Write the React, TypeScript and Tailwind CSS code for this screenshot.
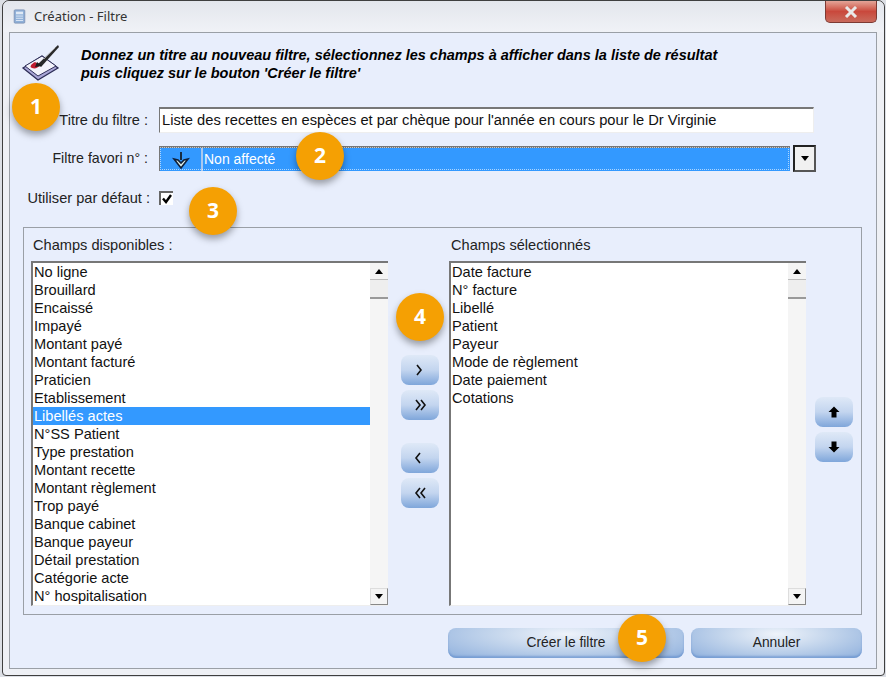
import type { ReactNode } from 'react';

const available = [
  'No ligne', 'Brouillard', 'Encaissé', 'Impayé', 'Montant payé', 'Montant facturé', 'Praticien',
  'Etablissement', 'Libellés actes', 'N°SS Patient', 'Type prestation', 'Montant recette',
  'Montant règlement', 'Trop payé', 'Banque cabinet', 'Banque payeur', 'Détail prestation',
  'Catégorie acte', 'N° hospitalisation',
];

const selected = [
  'Date facture', 'N° facture', 'Libellé', 'Patient', 'Payeur', 'Mode de règlement', 'Date paiement', 'Cotations',
];

function Badge({ n, className }: { n: number; className: string }) {
  return (
    <div
      className={`absolute w-[48px] h-[48px] rounded-full bg-[#f5a003] text-white font-bold text-[21px] flex items-center justify-center shadow-[0_4px_7px_rgba(0,0,0,0.35)] font-['Open_Sans',sans-serif] ${className}`}
    >
      {n}
    </div>
  );
}

function ScrollBar() {
  return (
    <div className="w-[18px] shrink-0 flex flex-col justify-between bg-[#f5f5f5]">
      <div>
        <div className="h-[17px] bg-[#f4f4f4] border-b border-[#bbb] flex items-center justify-center">
          <div className="w-0 h-0 border-x-[4px] border-x-transparent border-b-[5px] border-b-black" />
        </div>
        <div className="h-[19px] bg-[#eeeeee] border-b-2 border-[#999]" />
      </div>
      <div className="h-[17px] bg-[#f4f4f4] border border-[#ddd] border-b-[#888] border-r-[#888] flex items-center justify-center">
        <div className="w-0 h-0 border-x-[4px] border-x-transparent border-t-[5px] border-t-black" />
      </div>
    </div>
  );
}

function ListBox({ items, active }: { items: string[]; active?: string }) {
  return (
    <div className="w-[357px] h-[345px] flex bg-white border-l-2 border-t-2 border-[#777] border-b border-b-[#eee]">
      <ul className="flex-1 overflow-hidden">
        {items.map((item) => (
          <li
            key={item}
            className={`h-[18px] leading-[18px] pl-[1px] text-[14.6px] ${item === active ? 'bg-[#3399ff] text-white' : 'text-[#111]'}`}
          >
            {item}
          </li>
        ))}
      </ul>
      <ScrollBar />
    </div>
  );
}

function BlueButton({ children, className = '' }: { children: ReactNode; className?: string }) {
  return (
    <button className={`w-[38px] h-[30px] rounded-[8px] bg-gradient-to-b from-[#dfe9f7] via-[#c3d5ef] to-[#7fa6da] flex items-center justify-center text-black ${className}`}>
      {children}
    </button>
  );
}

function Chevrons({ dir, double }: { dir: 'left' | 'right'; double?: boolean }) {
  const base = dir === 'right' ? 'M6 5l4 5-4 5' : 'M10 5l-4 5 4 5';
  const second = dir === 'right' ? 'M11 5l4 5-4 5' : 'M15 5l-4 5 4 5';
  return (
    <svg width="20" height="20" viewBox="0 0 20 20" fill="none" stroke="#111" strokeWidth="1.6" className={double ? '' : dir === 'right' ? 'ml-[1px]' : ''}>
      <path d={base} />
      {double && <path d={second} />}
    </svg>
  );
}

function BlockArrow({ up }: { up?: boolean }) {
  return (
    <svg width="14" height="14" viewBox="0 0 14 14" fill="#000">
      <path d={up ? 'M7 1.5L12.5 7H9.5v5.5h-5V7H1.5z' : 'M7 12.5L12.5 7H9.5V1.5h-5V7H1.5z'} />
    </svg>
  );
}

function WideButton({ children, className }: { children: ReactNode; className: string }) {
  return (
    <button className={`h-[30px] rounded-[8px] text-[13.8px] text-[#222] bg-[radial-gradient(ellipse_at_50%_20%,#eef3fa_0%,#c3d5ec_45%,#8fb0dd_100%)] shadow-[inset_0_-2px_2px_rgba(90,135,200,0.55)] ${className}`}>
      {children}
    </button>
  );
}

export default function App() {
  return (
    <div className="relative w-[886px] h-[677px] overflow-hidden bg-[#dcdfe5] pl-[2px] font-['Liberation_Sans',sans-serif] text-[#222]">
      <div className="w-[883px] h-[676px] bg-[#eef0f5] border border-[#3f3f3f] rounded-t-[7px] rounded-b-[4px]">
        {/* barre de titre */}
        <div className="h-[31px] flex items-center pl-[10px] bg-gradient-to-b from-[#e3e6ec] to-[#f0f2f7] rounded-t-[7px]">
          <svg width="13" height="15" viewBox="0 0 14 17" className="mr-[8px]">
            <rect x="1" y="1" width="12" height="15" rx="1" fill="#8fb0d8" stroke="#7d92b5" />
            <rect x="3" y="3" width="8" height="3" fill="#dfe9f5" />
            <path d="M3 8h8M3 10.5h8M3 13h8" stroke="#e6eef8" strokeWidth="1" />
          </svg>
          <span className="text-[13px] text-[#333] font-['Noto_Sans',sans-serif]">Création - Filtre</span>
        </div>

        {/* panneau */}
        <div className="w-[868px] h-[637px] ml-[6px] bg-[#e8eefc] border border-[#9a9fa6] pt-[11px] pl-[12px]">
          <div className="flex h-[38px]">
            <svg width="38" height="38" viewBox="0 0 38 38" className="shrink-0">
              <path d="M1 24l19-12 16 12-20 12z" fill="#a9a6d6" stroke="#2c2c55" strokeWidth="1.3" />
              <path d="M3 22l17-10 14 10-18 10z" fill="#f3f3fb" stroke="#30305a" strokeWidth="1" />
              <path d="M36 1L16 20l3 3L37 3z" fill="#2a2a2a" />
              <path d="M33 4L22 15" stroke="#999" strokeWidth="1" />
              <path d="M13 18c-4 2-6 5-3 6 3 1 6 0 8-3z" fill="#c01c30" />
              <path d="M15 18l5 4-7 1z" fill="#1c1c1c" />
            </svg>
            <p className="ml-[21px] mt-[2px] text-[14.5px] leading-[18px] font-bold italic text-black whitespace-nowrap">
              Donnez un titre au nouveau filtre, sélectionnez les champs à afficher dans la liste de résultat
              <br />
              puis cliquez sur le bouton 'Créer le filtre'
            </p>
          </div>

          {/* champs du haut */}
          <div className="flex items-center mt-[25px] h-[26px] -ml-[12px]">
            <label className="w-[138px] mt-[2px] text-right text-[14.6px]">Titre du filtre :</label>
            <div className="ml-[11px] w-[655px] h-[26px] bg-white border-t-2 border-l border-[#777] border-b border-r border-b-[#eee] border-r-[#eee] pl-[2px] text-[14.7px] leading-[22px] text-[#111] whitespace-nowrap">
              Liste des recettes en espèces et par chèque pour l'année en cours pour le Dr Virginie
            </div>
          </div>
          <div className="flex items-center mt-[12px] h-[27px] -ml-[12px]">
            <label className="w-[138px] text-right text-[14.2px]">Filtre favori n° :</label>
            <div className="ml-[11px] w-[631px] h-[25px] bg-[#3399ff] border-t-2 border-l border-[#777] outline-1 -outline-offset-2 outline-dotted outline-white/60 flex items-center text-[14px] text-white">
              <div className="w-[43px] h-full border-r-2 border-[#a8c8ef] flex items-center justify-center">
                <svg width="18" height="18" viewBox="0 0 18 18">
                  <path d="M9 1v8" stroke="#111" strokeWidth="1.6" />
                  <path d="M2 8l7 9 7-9-4 1-3 3-3-3z" fill="#dff0e8" stroke="#10203a" strokeWidth="1.6" />
                </svg>
              </div>
              <span className="ml-[1px]">Non affecté</span>
            </div>
            <div className="ml-[3px] w-[23px] h-[27px] bg-[#f1f1f1] border-2 border-[#222] border-b-[#555] border-r-[#555] flex items-center justify-center">
              <div className="w-0 h-0 border-x-[4px] border-x-transparent border-t-[5px] border-t-black" />
            </div>
          </div>
          <div className="flex items-center mt-[19px] h-[14px] -ml-[12px]">
            <label className="w-[140px] mt-[2px] text-right text-[14.6px]">Utiliser par défaut :</label>
            <div className="ml-[9px] w-[14px] h-[14px] bg-white border-t-2 border-l-2 border-[#666] flex items-center justify-center">
              <svg width="10" height="10" viewBox="0 0 10 10" fill="none" stroke="#000" strokeWidth="2.4">
                <path d="M1 4.5l3 3.5L9 1" />
              </svg>
            </div>
          </div>

          {/* groupe des champs */}
          <div className="mt-[22px] ml-[1px] w-[839px] h-[388px] border border-[#9a9fa6] pt-[9px] pl-[7px] flex">
            <div>
              <p className="ml-[2px] h-[17px] text-[14.6px] leading-[17px]">Champs disponibles :</p>
              <div className="mt-[7px]">
                <ListBox items={available} active="Libellés actes" />
              </div>
            </div>
            <div className="w-[61px] pt-[118px] pl-[13px] flex flex-col">
              <BlueButton><Chevrons dir="right" /></BlueButton>
              <BlueButton className="mt-[5px]"><Chevrons dir="right" double /></BlueButton>
              <BlueButton className="mt-[23px]"><Chevrons dir="left" /></BlueButton>
              <BlueButton className="mt-[5px]"><Chevrons dir="left" double /></BlueButton>
            </div>
            <div>
              <p className="ml-[2px] h-[17px] text-[14.6px] leading-[17px]">Champs sélectionnés</p>
              <div className="mt-[7px]">
                <ListBox items={selected} />
              </div>
            </div>
            <div className="pt-[160px] pl-[9px] flex flex-col">
              <BlueButton><BlockArrow up /></BlueButton>
              <BlueButton className="mt-[5px]"><BlockArrow /></BlueButton>
            </div>
          </div>

          {/* boutons du bas */}
          <div className="mt-[13px] ml-[426px] flex gap-[7px]">
            <WideButton className="w-[236px]">Créer le filtre</WideButton>
            <WideButton className="w-[171px]">Annuler</WideButton>
          </div>
        </div>
      </div>

      <div className="absolute right-[9px] top-[1px] w-[52px] h-[22px] rounded-b-[5px] border border-[#7d3a33] border-t-0 bg-gradient-to-b from-[#e3a498] via-[#c9483c] to-[#c96a5c] flex items-center justify-center">
        <svg width="14" height="12" viewBox="0 0 14 12" stroke="#e9e9e9" strokeWidth="3">
          <path d="M2 1l10 10M12 1L2 11" />
        </svg>
      </div>

      <Badge n={1} className="left-[12px] top-[83px]" />
      <Badge n={2} className="left-[296px] top-[132px]" />
      <Badge n={3} className="left-[189px] top-[187px]" />
      <Badge n={4} className="left-[396px] top-[293px]" />
      <Badge n={5} className="left-[618px] top-[614px]" />
    </div>
  );
}
